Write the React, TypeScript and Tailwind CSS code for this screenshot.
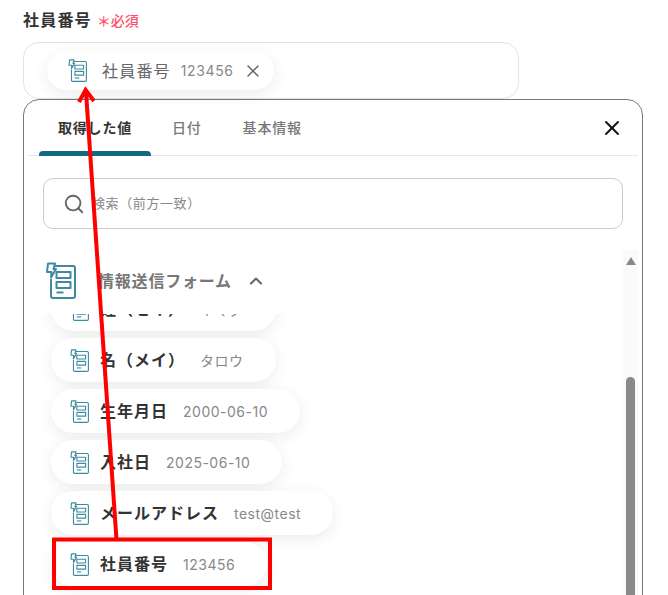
import React from 'react';
import { ChevronUp, Search, X } from 'lucide-react';

const FormIcon: React.FC<{ className?: string; strokeWidth?: number }> = ({ className, strokeWidth = 2 }) => (
  <svg viewBox="0 0 31 37" fill="none" stroke="#3f8a9f" strokeWidth={strokeWidth} strokeLinejoin="round" className={className}>
    <path d="M9 4h18a2 2 0 0 1 2 2v28a2 2 0 0 1-2 2H7a2 2 0 0 1-2-2V17" />
    <path d="M2 1.5h7L7.5 7H10L5 15.5 5.5 10H1z" />
    <rect x="10.5" y="10" width="14" height="6" />
    <rect x="10.5" y="20" width="14" height="6" />
    <path d="M10.5 30.5h7" />
  </svg>
);

const items = [
  { label: '姓（セイ）', value: 'ヤマダ' },
  { label: '名（メイ）', value: 'タロウ' },
  { label: '生年月日', value: '2000-06-10' },
  { label: '入社日', value: '2025-06-10' },
  { label: 'メールアドレス', value: 'test@test' },
  { label: '社員番号', value: '123456' },
];

const App: React.FC = () => {
  return (
    <div className="relative h-[595px] w-[668px] overflow-hidden bg-white font-['Inter','Noto_Sans_CJK_JP',sans-serif]">
      <div className="px-[23px] pt-[8px]">
        {/* Field label */}
        <div className="flex h-[24px] items-center">
          <span className="text-[16px] font-bold tracking-[1.2px] text-[#333]">社員番号</span>
          <span className="ml-[5px] text-[14px] font-medium text-[#ff4d6a]">＊必須</span>
        </div>

        {/* Selected value */}
        <div className="mt-[10px] h-[57px] w-[496px] rounded-[16px] border border-[#dfe3e8] pl-[23px] pt-[8px]">
          <div className="flex h-[39px] w-fit items-center rounded-full bg-white pl-[21px] pr-[11px] shadow-[0_4px_16px_rgba(0,0,0,0.08)]">
            <FormIcon className="h-[23px] w-[20px]" strokeWidth={1.8} />
            <span className="ml-[14px] text-[16px] tracking-[1.2px] text-[#666]">社員番号</span>
            <span className="ml-[10px] text-[14px] tracking-[0.6px] text-[#888]">123456</span>
            <X className="ml-[9px] h-[20px] w-[20px] text-[#666]" strokeWidth={1.8} />
          </div>
        </div>

        {/* Dropdown panel */}
        <div className="h-[520px] w-[620px] rounded-t-[16px] border border-[#777] px-[4px]">
          <div className="flex h-[56px] items-stretch border-b border-[#e6e8ea] pl-[11px] pr-[14px]">
            <div className="relative flex items-center px-[19px] text-[14px] font-bold tracking-[0.8px] text-[#333]">
              取得した値
              <div className="absolute inset-x-0 bottom-[-1px] h-[5px] rounded-t-[4px] bg-[#0f6a82]" />
            </div>
            <div className="flex items-center px-[21px] text-[14px] font-medium tracking-[0.8px] text-[#777]">日付</div>
            <div className="flex items-center px-[20px] text-[14px] font-medium tracking-[0.8px] text-[#777]">基本情報</div>
            <X className="my-auto ml-auto h-[24px] w-[24px] text-[#111]" strokeWidth={2} />
          </div>

          <div className="mx-[15px] mt-[22px] flex h-[51px] items-center rounded-[10px] border border-[#ccc] pl-[19px]">
            <Search className="h-[22px] w-[22px] text-[#666]" strokeWidth={2} />
            <span className="ml-[7px] text-[13px] tracking-[0.6px] text-[#888]">検索（前方一致）</span>
          </div>

          <div className="mt-[21px] flex h-[345px]">
            <div className="min-w-0 flex-1 pt-[12px]">
              <div className="flex h-[37px] items-center pl-[18px]">
                <FormIcon className="h-[37px] w-[31px]" />
                <span className="ml-[21px] text-[16px] font-bold tracking-[0.8px] text-[#777]">情報送信フォーム</span>
                <ChevronUp className="ml-[14px] h-[20px] w-[20px] text-[#666]" strokeWidth={2.5} />
              </div>
              <div className="mt-[15px] h-[281px] overflow-hidden">
                <div className="mt-[-27px] flex flex-col items-start gap-[7px] pl-[23px]">
                  {items.map((item) => (
                    <div key={item.label} className="flex h-[44px] items-center rounded-full bg-white pl-[19px] pr-[32px] shadow-[0_4px_16px_rgba(0,0,0,0.08)]">
                      <FormIcon className="h-[23px] w-[20px]" strokeWidth={1.8} />
                      <span className="ml-[10px] text-[16px] font-bold tracking-[1px] text-[#333]">{item.label}</span>
                      <span className="ml-[15px] text-[14px] tracking-[0.5px] text-[#888]">{item.value}</span>
                    </div>
                  ))}
                </div>
              </div>
            </div>

            {/* Scrollbar */}
            <div className="flex w-[15px] flex-col items-center bg-[#fafafa] pt-[7px]">
              <div className="h-0 w-0 border-x-[5px] border-b-[8px] border-x-transparent border-b-[#888]" />
              <div className="mt-[112px] w-[9px] flex-1 rounded-t-[5px] bg-[#8a8a8a]" />
            </div>
          </div>
        </div>
      </div>

      {/* Red annotation */}
      <svg className="absolute inset-0" width="668" height="595" fill="none" stroke="#ff0000">
        <rect x="54" y="539.5" width="216" height="48.5" strokeWidth="4" />
        <path d="M116.5 540 86 92" strokeWidth="4" />
        <path d="M79 102 85.6 90 94 101" strokeWidth="4" />
      </svg>
    </div>
  );
};

export default App;
